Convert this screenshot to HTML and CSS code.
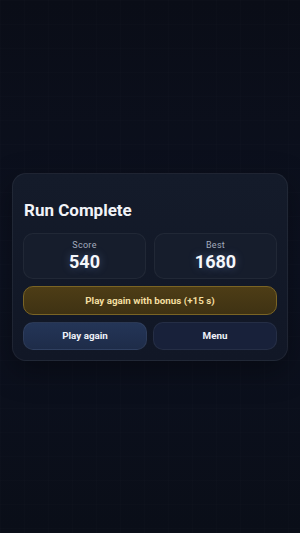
FILE: index.html
```html
<!DOCTYPE html>
<html>
<head>
<meta charset="utf-8">
<link rel="stylesheet" href="styles.css">
</head>
<body>
<main class="screen">
  <section class="card">
    <h1 class="title">Run Complete</h1>
    <div class="stats">
      <div class="stat">
        <div class="stat-label">Score</div>
        <div class="stat-value">540</div>
      </div>
      <div class="stat">
        <div class="stat-label">Best</div>
        <div class="stat-value">1680</div>
      </div>
    </div>
    <button class="btn btn-bonus">Play again with bonus (+15 s)</button>
    <div class="row">
      <button class="btn btn-primary">Play again</button>
      <button class="btn btn-secondary">Menu</button>
    </div>
  </section>
</main>
</body>
</html>
```

FILE: styles.css
```css
* { box-sizing: border-box; }
html, body {
  margin: 0;
  height: 100%;
}
body {
  font-family: Roboto, "Liberation Sans", sans-serif;
  background-color: #0b0f1a;
  background-image:
    linear-gradient(rgba(255,255,255,0.006) 1px, transparent 1px),
    linear-gradient(90deg, rgba(255,255,255,0.006) 1px, transparent 1px),
    linear-gradient(180deg, #0a0d17 0%, #0c1120 50%, #0a0e18 100%);
  background-size: 24px 24px, 24px 24px, 100% 100%;
  color: #eef1f7;
}
.screen {
  height: 100%;
  display: flex;
  align-items: center;
  justify-content: center;
  padding: 0 12px;
}
.card {
  width: 100%;
  background: linear-gradient(180deg, #141b2a 0%, #111726 100%);
  border: 1px solid rgba(255,255,255,0.06);
  border-radius: 14px;
  padding: 22px 10px 10px 10px;
  box-shadow: 0 10px 30px rgba(0,0,0,0.35);
}
.title {
  margin: 0 0 9px 1px;
  font-size: 17px;
  font-weight: 700;
  line-height: 28px;
  color: #f1f3f8;
}
.stats {
  display: grid;
  grid-template-columns: 1fr 1fr;
  gap: 8px;
}
.stat {
  height: 46px;
  border-radius: 10px;
  background: #161d2c;
  border: 1px solid rgba(255,255,255,0.05);
  display: flex;
  flex-direction: column;
  align-items: center;
  justify-content: center;
}
.stat-label {
  font-size: 9px;
  color: #a3abbd;
  line-height: 11px;
  letter-spacing: 0.3px;
}
.stat-value {
  font-size: 18px;
  font-weight: 700;
  line-height: 21px;
  color: #f5f7fb;
  text-shadow: 0 0 8px rgba(140,180,255,0.35);
}
.btn {
  display: flex;
  align-items: center;
  justify-content: center;
  font-family: Roboto, "Liberation Sans", sans-serif;
  font-size: 9.8px;
  font-weight: 700;
  border-radius: 10px;
  width: 100%;
  cursor: pointer;
}
.btn-bonus {
  margin-top: 7px;
  height: 29px;
  background: linear-gradient(180deg, #4d3d16 0%, #3f3213 100%);
  border: 1px solid #7a6424;
  color: #f3dfa0;
}
.row {
  margin-top: 7px;
  display: grid;
  grid-template-columns: 1fr 1fr;
  gap: 6px;
}
.btn-primary {
  height: 28px;
  background: linear-gradient(180deg, #243557 0%, #1e2c49 100%);
  border: 1px solid rgba(255,255,255,0.06);
  color: #eef1f8;
}
.btn-secondary {
  height: 28px;
  background: #18213a;
  border: 1px solid rgba(255,255,255,0.06);
  color: #eef1f8;
}
```
